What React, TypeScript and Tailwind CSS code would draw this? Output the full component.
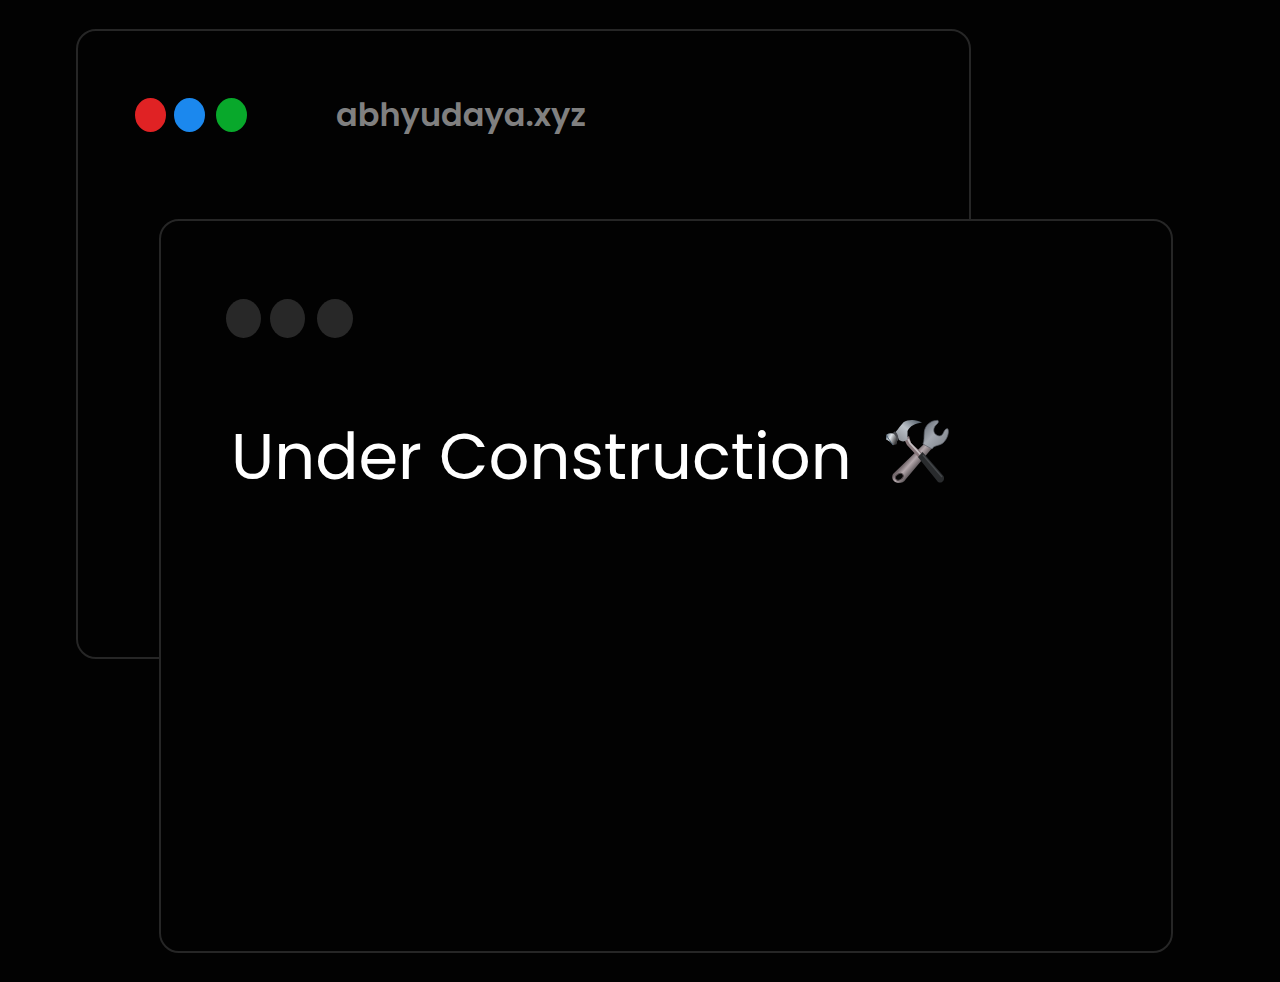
function HammerAndWrench() {
  return (
    <svg viewBox="0 0 66 68" className="mt-2 h-[68px] w-[66px] shrink-0" role="img" aria-label="Hammer and wrench">
      <defs>
        <linearGradient id="wrench" gradientUnits="userSpaceOnUse" x1="24" y1="41" x2="33" y2="49">
          <stop offset="0" stopColor="#6f6468" />
          <stop offset="0.4" stopColor="#b5a9ad" />
          <stop offset="1" stopColor="#5d5659" />
        </linearGradient>
        <linearGradient id="jaw" x1="0" y1="0" x2="1" y2="1">
          <stop offset="0" stopColor="#5f6670" />
          <stop offset="0.45" stopColor="#a3a8b0" />
          <stop offset="1" stopColor="#777b82" />
        </linearGradient>
        <linearGradient id="claw" x1="0" y1="1" x2="1" y2="0">
          <stop offset="0" stopColor="#85898f" />
          <stop offset="0.5" stopColor="#bcc2c9" />
          <stop offset="1" stopColor="#46525d" />
        </linearGradient>
        <linearGradient id="face" x1="0" y1="0" x2="1" y2="0.5">
          <stop offset="0" stopColor="#536373" />
          <stop offset="0.45" stopColor="#e0e5e9" />
          <stop offset="1" stopColor="#3c3c3e" />
        </linearGradient>
      </defs>
      <path
        d="M39 27 L8 57 C6 61 8 65 13 66 C17 66 19 65 21 62 L48 30 Z"
        fill="url(#wrench)"
      />
      <ellipse cx="14.3" cy="59.8" rx="4.2" ry="3" transform="rotate(-32 14.3 59.8)" fill="#050505" stroke="#51484b" />
      <path
        d="M53 3.4 C46 3 40 8 39.3 15 C38.8 20 39.5 23 38 27 L47 32 C49 28 54 29 58 26 C62.5 22 64.5 15 62.8 11.8 C60.8 11.2 59.3 13.6 58.3 16 C57 19 54.5 19.5 52 18.3 C48.8 16.6 48 13 49.5 10 C51 7.2 54.5 6 53 3.4 Z"
        fill="url(#jaw)"
        stroke="#5b6068"
        strokeWidth="0.7"
      />
      <path d="M19 22 L24 19 L26 26 L38 37 L34 41 L22 28 Z" fill="#87777b" />
      <path d="M23 22 L25 26 L36 38" fill="none" stroke="#c6c0c3" strokeWidth="1.7" />
      <path d="M37.5 35 L58.5 59 C60.5 63 57 67 53 65 C46 56 39 48 33 40 Z" fill="#292b2d" />
      <path d="M38 38 L57 60" fill="none" stroke="#44474a" strokeWidth="1.3" />
      <path
        d="M37 5.6 C31 2 23 2.3 18.5 5.3 C15 9 13.5 12 10.5 15 L14 23 C17 25 20 25 22.5 22 L22.5 14 C25 9 30 6.8 37 5.6 Z"
        fill="url(#claw)"
      />
      <path d="M9.5 14.5 C12.5 15.5 14 20 13 24 L9.5 22 C8.5 19 8 18 7 17 Z" fill="#494b50" />
      <path d="M1.5 17.5 C4 16 7 16 9 17 C12 20 13 24 11.5 27.2 L8 28.2 C6 25.5 4 23.7 1 22.5 Z" fill="url(#face)" />
      <path d="M1.3 17.8 C2.7 21 6 25 8 28" fill="none" stroke="#4b6073" strokeWidth="0.9" />
    </svg>
  );
}

export default function App() {
  return (
    <main className="grid min-h-screen grid-cols-[83fr_812fr_202fr] grid-rows-[190fr_440fr_294fr] bg-[#020202] pt-[29px] pr-[107px] pb-[29px] pl-[76px] font-['Poppins','Inter',sans-serif]">
      <section className="col-span-2 col-start-1 row-span-2 row-start-1 min-w-0 rounded-[20px] border-2 border-[#262626] bg-[#020202] px-[57px] pt-[60px]">
        <header className="flex items-center">
          <div className="flex shrink-0">
            <span className="mr-2 h-[34px] w-[31px] rounded-[50%] bg-[#e02224]" />
            <span className="mr-[11px] h-[34px] w-[31px] rounded-[50%] bg-[#1b88ee]" />
            <span className="h-[34px] w-[31px] rounded-[50%] bg-[#08a82b]" />
          </div>
          <p className="pl-[89px] text-[32px] leading-[48px] font-semibold text-[#808080]">abhyudaya.xyz</p>
        </header>
      </section>
      <section className="col-span-2 col-start-2 row-span-2 row-start-2 min-w-0 rounded-[20px] border-2 border-[#262626] bg-[#020202] px-[65px] pt-[78px]">
        <div className="flex">
          <span className="mr-[9px] h-[39px] w-[35px] rounded-[50%] bg-[#282828]" />
          <span className="mr-3 h-[39px] w-[35px] rounded-[50%] bg-[#282828]" />
          <span className="h-[39px] w-[36px] rounded-[50%] bg-[#282828]" />
        </div>
        <div className="mt-[71px] flex items-start gap-[33px] pl-[5px]">
          <h1 className="text-[64px] leading-[96px] font-normal whitespace-nowrap text-white">Under Construction</h1>
          <HammerAndWrench />
        </div>
      </section>
    </main>
  );
}
